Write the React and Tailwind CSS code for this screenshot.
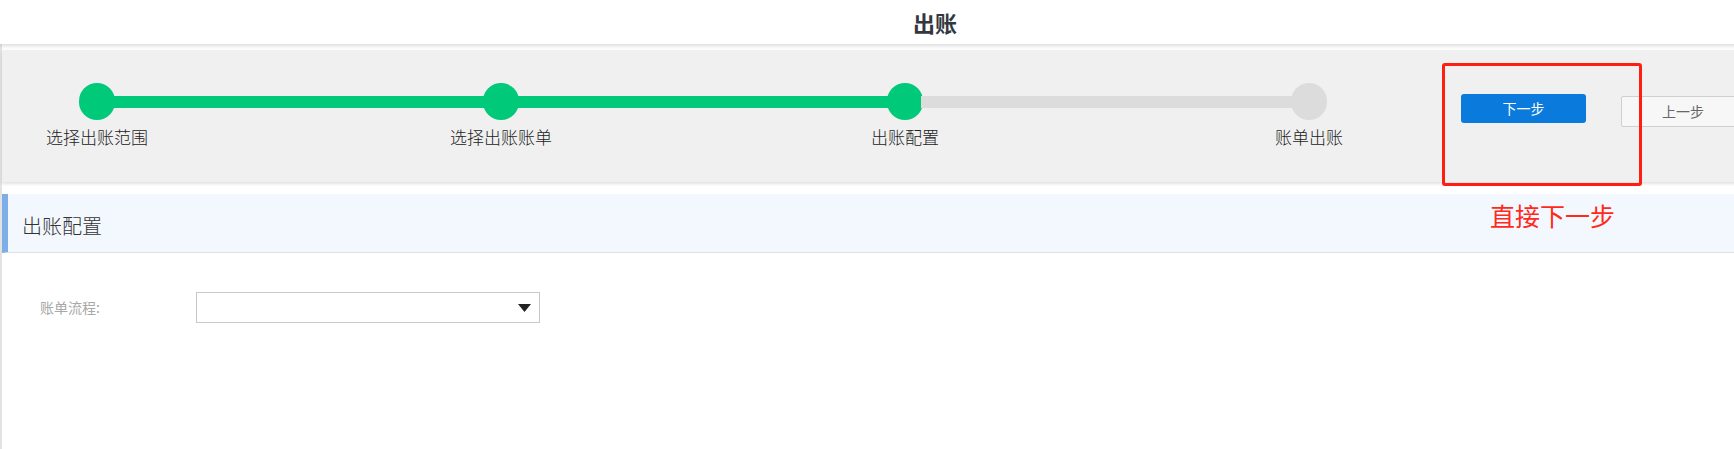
import React from 'react';

const steps = [
  { label: '选择出账范围', done: true },
  { label: '选择出账账单', done: true },
  { label: '出账配置', done: true },
  { label: '账单出账', done: false },
];

function Step({ label, done }) {
  return (
    <div className="flex w-9 shrink-0 flex-col items-center">
      <div className={`h-[37px] w-9 rounded-full ${done ? 'bg-[#00c97a]' : 'bg-[#dcdcdc]'}`} />
      <div className="mt-[5px] whitespace-nowrap text-[17px] font-light leading-[24px] text-[#222]">{label}</div>
    </div>
  );
}

export default function App() {
  return (
    <div
      className="relative h-[449px] w-full overflow-hidden bg-white"
      style={{ fontFamily: '"Noto Sans CJK SC", "Noto Sans", sans-serif' }}
    >
      <div className="flex h-full w-[1870px] flex-col">
        {/* Header */}
        <header className="relative z-10 flex h-[44px] shrink-0 items-center justify-center bg-white shadow-[0_2px_4px_rgba(0,0,0,0.14)]">
          <h1 className="text-[22px] font-bold leading-none text-[#333840]">出账</h1>
        </header>

        <div className="flex-1 border-l-2 border-[#e2e2e2] pt-[6px]">
          {/* Steps panel */}
          <div className="relative flex h-[132px] bg-[#f0f0f0] shadow-[0_2px_3px_rgba(0,0,0,0.12)]">
            <div className="flex items-start pl-[77px] pt-[33px]">
              {steps.map((s, i) => (
                <React.Fragment key={s.label}>
                  <Step {...s} />
                  {i < steps.length - 1 && (
                    <div
                      className={`-mx-[2px] mt-[13px] h-[12px] w-[372px] ${
                        steps[i + 1].done ? 'bg-[#00c97a]' : 'bg-[#dcdcdc]'
                      }`}
                    />
                  )}
                </React.Fragment>
              ))}
            </div>

            <div className="ml-[134px] flex items-start">
              <button className="mt-[44px] h-[29px] w-[125px] rounded-[3px] bg-[#0a7bdc] text-[14px] text-white">
                下一步
              </button>
              <button className="ml-[35px] mt-[46px] h-[31px] w-[124px] rounded-[2px] border border-[#cfcfcf] bg-[#f7f7f7] text-[14px] text-[#666]">
                上一步
              </button>
            </div>
          </div>

          {/* Section */}
          <div className="mt-[12px]">
            <div className="h-[59px] border-b border-l-[6px] border-b-[#e2e2e2] border-l-[#7eaee8] bg-[#f3f7fe] pl-[14px] pt-[19px]">
              <h2 className="text-[20px] font-light leading-[26px] text-[#333]">出账配置</h2>
            </div>

            <div className="flex items-center pl-[38px] pt-[39px]">
              <label className="w-[156px] text-[14px] text-[#a8a8a8]">账单流程:</label>
              <div className="flex h-[31px] w-[344px] items-center justify-end border border-[#c8c8c8] bg-white pr-[8px]">
                <svg width="13" height="8" viewBox="0 0 13 8">
                  <path d="M0 0 L13 0 L6.5 8 Z" fill="#222" />
                </svg>
              </div>
            </div>
          </div>
        </div>
      </div>

      {/* Annotation */}
      <div className="absolute left-[1442px] top-[63px] h-[123px] w-[200px] rounded-[3px] border-[3px] border-[#ff1e12]" />
      <div className="absolute left-[1490px] top-[199px] text-[25px] leading-[32px] text-[#ff2a1a]">直接下一步</div>
    </div>
  );
}
